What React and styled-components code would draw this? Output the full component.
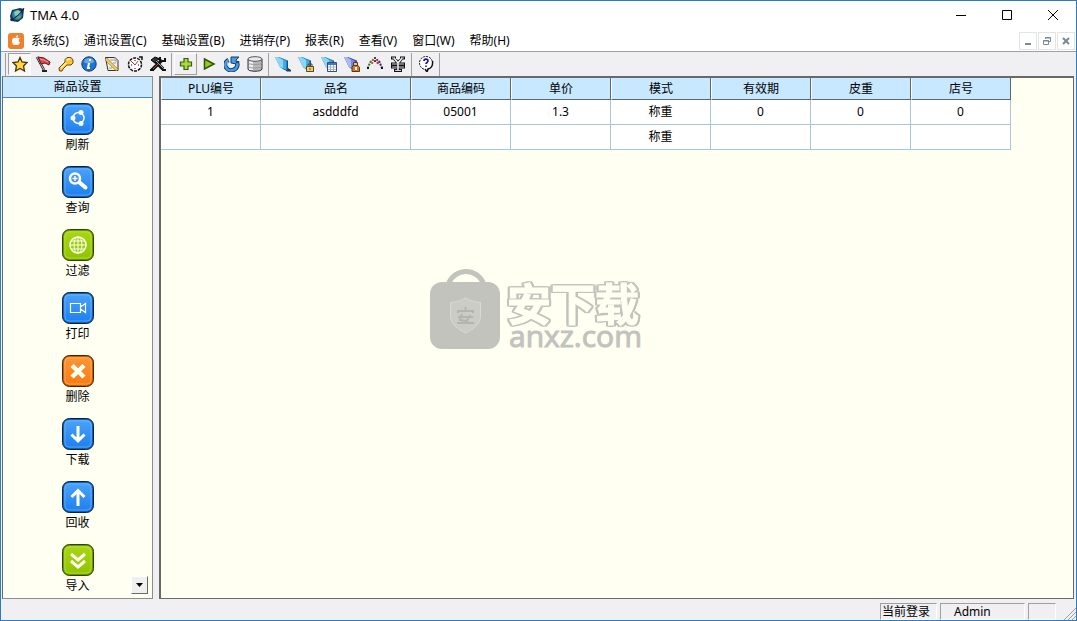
import React from 'react';
import styled, { createGlobalStyle, css } from 'styled-components';

const menus = [
  '系统(S)',
  '通讯设置(C)',
  '基础设置(B)',
  '进销存(P)',
  '报表(R)',
  '查看(V)',
  '窗口(W)',
  '帮助(H)',
];

const toolGroups = [
  [
    { name: 'star', state: 'pressed' },
    { name: 'flag' },
    { name: 'key' },
    { name: 'info' },
    { name: 'note' },
    { name: 'clock' },
    { name: 'tools' },
  ],
  [{ name: 'plus', state: 'raised' }, { name: 'play' }, { name: 'reload' }, { name: 'database' }],
  [
    { name: 'book' },
    { name: 'bookLock' },
    { name: 'bookGrid' },
    { name: 'bookUser' },
    { name: 'people' },
    { name: 'yen' },
  ],
  [{ name: 'help' }],
];

const sideItems = [
  { label: '刷新', icon: 'share', color: 'blue' },
  { label: '查询', icon: 'search', color: 'blue' },
  { label: '过滤', icon: 'globe', color: 'green' },
  { label: '打印', icon: 'camera', color: 'blue' },
  { label: '删除', icon: 'cross', color: 'orange' },
  { label: '下载', icon: 'down', color: 'blue' },
  { label: '回收', icon: 'up', color: 'blue' },
  { label: '导入', icon: 'chevrons', color: 'green' },
];

const columns = [
  { title: 'PLU编号', width: 100 },
  { title: '品名', width: 150 },
  { title: '商品编码', width: 100 },
  { title: '单价', width: 100 },
  { title: '模式', width: 100 },
  { title: '有效期', width: 100 },
  { title: '皮重', width: 100 },
  { title: '店号', width: 100 },
];

const rows = [
  ['1', 'asdddfd', '05001', '1.3', '称重', '0', '0', '0'],
  ['', '', '', '', '称重', '', '', ''],
];

const tileColors = {
  blue: { top: '#4aa3f8', bottom: '#1e7ff0', edge: '#06243f', mid: '#1160b4', light: '#7cbcf8' },
  green: { top: '#a8d614', bottom: '#8fc400', edge: '#2c4200', mid: '#6b9600', light: '#c3e552' },
  orange: { top: '#ff9636', bottom: '#f57c12', edge: '#4a2202', mid: '#c25e08', light: '#ffb772' },
};

const bookShape = (
  <>
    <path d="M6 11l6 4.500h4V14l-3-2z" fill="#2a3550" />
    <path d="M0 1h4l9 3.500V14H9L5 11z" fill="#1f86c4" />
    <path d="M1 1.500h3L11 5v8H9L5 11z" fill="#45ade0" />
    <path d="M0 1h3l5 3v8L5 11z" fill="#8fd6f5" />
    <path d="M12 5h1v9.500l-1-.5z" fill="#14508c" />
  </>
);

const toolGlyphs = {
  star: (
    <path
      d="M8 1.500 10 6l5 .5-3.500 3.500 1 5L8 12.500 3.500 15l1-5L1 6.500 6 6z"
      fill="#ffd83a"
      stroke="#4a3500"
      strokeWidth="1.300"
    />
  ),
  flag: (
    <>
      <path d="M2 1 9 14" stroke="#222" strokeWidth="2.500" />
      <path d="M2 1 9 14" stroke="#c4c4c4" />
      <path d="M3 1 9 2l6 4-1 3-4-2-4 1z" fill="#d8484e" stroke="#6a1418" />
      <path d="M5 3 9 4l4 2" stroke="#f29a9d" />
      <path d="M7 15h5" stroke="#222" strokeWidth="2" />
    </>
  ),
  key: (
    <>
      <path
        d="M9 1.500h4L15 4v3l-2 2H9l-4 4-1 2H1.500L1 12l6-6V3.500z"
        fill="#f7c53c"
        stroke="#6f4a05"
      />
      <path d="M9 4 12 2.500M3 12l5-5" stroke="#fff0a0" strokeWidth="1.500" />
    </>
  ),
  info: (
    <>
      <circle cx="8" cy="8" r="7.200" fill="#1f74d0" stroke="#123a78" />
      <path d="M3 6a5 4 0 0 1 10 0c-3 2-7 2-10 0" fill="#65a9ea" />
      <path d="M9 3v2M8 7 7 12h2" stroke="#fff" strokeWidth="2" fill="none" />
    </>
  ),
  note: (
    <>
      <path d="M1.500 1.500H11l3 3v10H4z" fill="#f4f1df" stroke="#333" />
      <path d="M11 1v4h3M6 4h4M9 7h3M5 12h3" stroke="#999" fill="none" />
      <path d="M2 3 13 14" stroke="#8a6a28" strokeWidth="3" />
      <path d="M2 3 13 14" stroke="#f6cd68" strokeWidth="2" />
    </>
  ),
  clock: (
    <>
      <circle
        cx="8"
        cy="8.500"
        r="6.500"
        fill="#fff"
        stroke="#111"
        strokeWidth="1.500"
        strokeDasharray="3 1"
      />
      <path d="M8 9 4 5M8 9l3-4" stroke="#b43030" />
      <path d="M8 4v1M8 12v1M4 9h1M11 9h1" stroke="#111" />
      <path d="M12 1h3v3" stroke="#111" fill="none" strokeWidth="1.500" />
    </>
  ),
  tools: (
    <>
      <path d="M2 14 12 4M4 4l9 9" stroke="#111" strokeWidth="3.500" />
      <path d="M1 4 5 1l5 2-3 1-2 3z" fill="#333" stroke="#000" />
      <path d="M10 1v4h5V2M12 14h4M0 14h4" stroke="#111" strokeWidth="2" fill="none" />
      <path d="M3 13 9 7" stroke="#c13c3c" />
      <path d="M6 5 13 12" stroke="#aaa" />
    </>
  ),
  plus: (
    <path
      d="M6 2.500h4V6h3.500v4H10v3.500H6V10H2.500V6H6z"
      fill="#a5dc38"
      stroke="#3c5c14"
      strokeWidth="1.200"
    />
  ),
  play: <path d="M3.500 3 13 8l-9.500 5z" fill="#8ed01c" stroke="#34500f" strokeWidth="1.500" />,
  reload: (
    <>
      <path
        d="M4.500 4A6 5.500 0 1 0 13 7V5"
        fill="none"
        stroke="#153c6e"
        strokeWidth="4.500"
      />
      <path d="M7 1h8l-3 3 1 4-6-1z" fill="#4a9be0" stroke="#153c6e" />
      <path d="M4.500 4A6 5.500 0 1 0 13 7" fill="none" stroke="#4a9be0" strokeWidth="2.500" />
      <path d="M4 6a4 4 0 0 0 1 5" fill="none" stroke="#b6dcf7" />
    </>
  ),
  database: (
    <>
      <path d="M1 3v10c0 3 14 3 14 0V3" fill="#b8b8b8" stroke="#333" />
      <path d="M4 4v10" stroke="#eee" strokeWidth="4" />
      <path d="M1 7c2 2 12 2 14 0M1 10.500c2 2 12 2 14 0" fill="none" stroke="#999" />
      <ellipse cx="8" cy="3" rx="7" ry="2.300" fill="#eaeaea" stroke="#555" />
    </>
  ),
  book: bookShape,
  bookLock: (
    <>
      {bookShape}
      <path d="M8.500 10.500h7v5h-7z" fill="#ecd06b" stroke="#5c4a16" />
      <path d="M10 10V8h4v2" stroke="#5c4a16" fill="none" />
      <path d="M12 12v2" stroke="#5c4a16" />
    </>
  ),
  bookGrid: (
    <>
      {bookShape}
      <path d="M6.500 6.500h9v9h-9z" fill="#fff" stroke="#334c7c" />
      <path d="M7 8h8" stroke="#5371ac" strokeWidth="2" />
      <path d="M7 11h8M7 13.500h8M9.500 9v6M12.500 9v6" stroke="#a3b0c8" />
    </>
  ),
  bookUser: (
    <>
      <path d="M0 1h4l9 3.500V14H9L5 11z" fill="#3f4bb0" />
      <path d="M1 1.500h3L11 5v8H9L5 11z" fill="#6f8ae0" />
      <path d="M0 1h3l4 3v7.500L5 11z" fill="#a9bcf2" />
      <path d="M9 9.500h5l1.500 2v4H8v-4z" fill="#d07a2b" stroke="#5a3416" />
      <path d="M9.500 6.500h4v3h-4z" fill="#f0c28d" stroke="#5a3416" />
      <path d="M11 11h2v3h-2z" fill="#fff" />
    </>
  ),
  people: (
    <>
      <path d="M4 5 1 11" stroke="#24832c" strokeWidth="2" strokeDasharray="2 1" />
      <path d="M6 3 5 8" stroke="#d24a35" strokeWidth="2" strokeDasharray="2 1" />
      <path d="M8 1v5" stroke="#111" strokeWidth="1.500" strokeDasharray="2 1" />
      <path d="m10 3 1 6" stroke="#b82836" strokeWidth="2" strokeDasharray="2 1" />
      <path d="m12 5 3 7" stroke="#3a2f78" strokeWidth="2" strokeDasharray="2 1" />
      <path d="M0 12h2M14 12h2" stroke="#111" strokeWidth="2" />
    </>
  ),
  yen: (
    <>
      <path
        d="M1 2h5M10 2h5M4 2l4 5 4-5M1 8h14M1 11h14M8 7v7M4 14.500h8"
        stroke="#111"
        strokeWidth="3"
        fill="none"
      />
      <path d="M4 2l4 5 4-5M8 7v7" stroke="#f4f4f4" strokeWidth="1.600" fill="none" />
      <path d="M2 8h12M2 11h12M2 2h3M11 2h3M5 14.500h6" stroke="#d4d4d4" fill="none" />
    </>
  ),
  help: (
    <>
      <circle cx="8" cy="7" r="6.500" fill="#fff" stroke="#111" strokeDasharray="2 1" />
      <path d="M7 13l2 3 1-3c4-1 5-4 4.500-8" fill="#fff" stroke="#111" strokeWidth="1.500" />
      <path
        d="M6 5c0-2.500 4-2.500 4 0 0 1.500-2 1.500-2 3M8 9.500v1.500"
        fill="none"
        stroke="#171796"
        strokeWidth="1.600"
      />
    </>
  ),
};

const tileGlyphs = {
  share: (
    <>
      <circle cx="16.500" cy="15" r="5.500" fill="none" strokeWidth="1.500" />
      <circle cx="11" cy="15" r="2.500" fill="#fff" stroke="none" />
      <circle cx="19" cy="9.500" r="2.500" fill="#fff" stroke="none" />
      <circle cx="19" cy="20.500" r="2.500" fill="#fff" stroke="none" />
    </>
  ),
  search: (
    <>
      <circle cx="13" cy="12.500" r="5" strokeWidth="2.500" />
      <path d="M10.500 12.500h5M13 10v5" strokeWidth="1.500" />
      <path d="m17.500 16.500 6 5" strokeWidth="4" strokeLinecap="round" />
    </>
  ),
  globe: (
    <>
      <circle cx="16" cy="16" r="8" strokeWidth="1.500" />
      <ellipse cx="16" cy="16" rx="4" ry="8" />
      <path d="M16 8v16M8 16h16M9.500 12h13M9.500 20h13" />
    </>
  ),
  camera: <path d="M8.500 11.500h10v9h-10zM18.500 15l5-3.500v9l-5-3.500" strokeWidth="1.200" />,
  cross: <path d="m10 10.500 12 11.500M22 10.500 10 22" strokeWidth="4.500" />,
  down: <path d="M16 8v15M9.500 16.500 16 23l6.500-6.500" strokeWidth="3" />,
  up: <path d="M16 25V10M9.500 16 16 9.500l6.500 6.500" strokeWidth="3" />,
  chevrons: <path d="m9 10 7 6 7-6M9 17l7 6 7-6" strokeWidth="3" />,
};

function ToolIcon({ name }) {
  return (
    <svg width="16" height="16" viewBox="0 0 16 16" fill="none" aria-hidden="true">
      {toolGlyphs[name]}
    </svg>
  );
}

function TileIcon({ icon, color }) {
  const c = tileColors[color];
  return (
    <svg width="32" height="32" viewBox="0 0 32 32" fill="none" aria-hidden="true">
      <defs>
        <linearGradient id={`fill-${icon}`} x1="0" y1="0" x2="0" y2="1">
          <stop offset="0" stopColor={c.top} />
          <stop offset="1" stopColor={c.bottom} />
        </linearGradient>
      </defs>
      <rect x="0.5" y="0.5" width="31" height="31" rx="7" fill={c.mid} stroke={c.edge} />
      <rect x="2" y="2" width="28" height="28" rx="5" fill={`url(#fill-${icon})`} />
      <rect x="3" y="3" width="26" height="26" rx="4" stroke={c.light} opacity="0.6" />
      <g stroke="#fffff2">{tileGlyphs[icon]}</g>
    </svg>
  );
}

function AppLogo() {
  return (
    <svg width="16" height="16" viewBox="0 0 16 16" aria-hidden="true">
      <path d="M3 3 11 1l4 1-1 9-5 4-7-1-1-5z" fill="#16374f" />
      <circle cx="8" cy="8" r="5" fill="#2d7fae" />
      <path d="M5 5 9 3l3 2-3 3-3 1z" fill="#8cc8bf" />
      <path d="M7 10l4-2 1 2-3 2z" fill="#66a368" />
      <path d="M1 13C4 13 13 6 15 1" fill="none" stroke="#0b1d30" />
    </svg>
  );
}

function AppleBadge() {
  return (
    <svg width="16" height="16" viewBox="0 0 16 16" aria-hidden="true">
      <rect width="16" height="16" rx="3" fill="#f0812c" />
      <path
        d="M11 5c-1-1-2-.5-3 0-2-1-4 0-4 3 0 2 1 4.500 3 4 1-.3 1.500-.3 2 0 1.500.3 2.500-1 3-2.500-1.500-1-1.800-3-.2-4zM8 4.500C8 3 9 2.200 10 2c0 1.500-1 2.300-2 2.500"
        fill="#fff"
      />
    </svg>
  );
}

function Watermark() {
  return (
    <WatermarkBox>
      <svg width="71" height="81" viewBox="0 0 71 81" aria-hidden="true">
        <path d="M18 16c6-18 30-18 36 0" fill="none" stroke="#c2c3bd" strokeWidth="5" />
        <rect x="0" y="13" width="70" height="67" rx="12" fill="#c2c3bd" />
        <path
          d="M35.500 29c5 3 10 4 15 4.500V47c0 8-7 13-15 17-8-4-15-9-15-17V33.500c5-.5 10-1.500 15-4.500z"
          fill="#cbccc6"
          stroke="#d8d9d2"
        />
        <path
          d="M35.500 38v3M28 44v-2h15v2M28 48h15M32 45c-1 3-2 5-2 6 4 0 7 1 10 3M40 46c-1 4-4 7-9 8M27 54h17"
          fill="none"
          stroke="#b4b5af"
          strokeWidth="2"
        />
      </svg>
      <WatermarkText>
        <WatermarkName>安下载</WatermarkName>
        <WatermarkSite>anxz.com</WatermarkSite>
      </WatermarkText>
    </WatermarkBox>
  );
}

function App() {
  return (
    <>
      <GlobalStyle />
      <Window>
        <TitleBar>
          <AppLogo />
          <Title>TMA 4.0</Title>
          <CaptionButton aria-label="Minimize">
            <svg width="12" height="12" viewBox="0 0 12 12" stroke="#000" fill="none">
              <path d="M1 6.500h10" />
            </svg>
          </CaptionButton>
          <CaptionButton aria-label="Maximize">
            <svg width="12" height="12" viewBox="0 0 12 12" stroke="#000" fill="none">
              <path d="M1.500 1.500h9v9h-9z" />
            </svg>
          </CaptionButton>
          <CaptionButton aria-label="Close">
            <svg width="12" height="12" viewBox="0 0 12 12" stroke="#000" fill="none">
              <path d="m1 1 10 10M11 1 1 11" />
            </svg>
          </CaptionButton>
        </TitleBar>

        <MenuBar>
          <AppleBadge />
          <MenuList>
            {menus.map(menu => (
              <MenuButton key={menu}>{menu}</MenuButton>
            ))}
          </MenuList>
          <ChildControls>
            <ChildButton aria-label="Minimize child window">
              <svg width="10" height="10" viewBox="0 0 10 10" stroke="#7a8794" fill="none">
                <path d="M2 8h6" strokeWidth="2" />
              </svg>
            </ChildButton>
            <ChildButton aria-label="Restore child window">
              <svg width="10" height="10" viewBox="0 0 10 10" stroke="#7a8794" fill="none">
                <path d="M3.500 3V1.500h5v4H7M3 2h6M1 5h6" />
                <path d="M1.500 4.500h5v4h-5z" />
              </svg>
            </ChildButton>
            <ChildButton aria-label="Close child window">
              <svg width="10" height="10" viewBox="0 0 10 10" stroke="#7a8794" fill="none">
                <path d="m2 2 6 6M8 2 2 8" strokeWidth="2" />
              </svg>
            </ChildButton>
          </ChildControls>
        </MenuBar>

        <ToolBar>
          {toolGroups.map((group, index) => (
            <ToolGroup key={index}>
              {group.map(tool => (
                <ToolButton key={tool.name} $state={tool.state} aria-label={tool.name}>
                  <ToolIcon name={tool.name} />
                </ToolButton>
              ))}
            </ToolGroup>
          ))}
        </ToolBar>

        <Workspace>
          <Sidebar>
            <SidebarTitle>商品设置</SidebarTitle>
            <SideList>
              {sideItems.map(item => (
                <li key={item.label}>
                  <SideButton>
                    <TileIcon icon={item.icon} color={item.color} />
                    {item.label}
                  </SideButton>
                </li>
              ))}
            </SideList>
            <ScrollButton aria-label="Scroll down">
              <svg width="7" height="4" viewBox="0 0 7 4" aria-hidden="true">
                <path d="M0 0h7L3.500 4z" fill="#000" />
              </svg>
            </ScrollButton>
          </Sidebar>

          <Content>
            <Table>
              <colgroup>
                {columns.map(column => (
                  <Col key={column.title} $width={column.width} />
                ))}
              </colgroup>
              <thead>
                <tr>
                  {columns.map(column => (
                    <HeadCell key={column.title}>{column.title}</HeadCell>
                  ))}
                </tr>
              </thead>
              <tbody>
                {rows.map((row, rowIndex) => (
                  <tr key={rowIndex}>
                    {row.map((value, index) => (
                      <Cell key={index}>{value}</Cell>
                    ))}
                  </tr>
                ))}
              </tbody>
            </Table>
            <Watermark />
          </Content>
        </Workspace>

        <StatusBar>
          <StatusPane $width={57}>当前登录</StatusPane>
          <StatusPane $width={85} $indent={13}>
            Admin
          </StatusPane>
          <StatusPane $width={28} />
          <SizeGrip width="14" height="14" viewBox="0 0 14 14" stroke="#a0a0a0" aria-hidden="true">
            <path d="M2 14 14 2M6 14l8-8M10 14l4-4" />
          </SizeGrip>
        </StatusBar>
      </Window>
    </>
  );
}

const GlobalStyle = createGlobalStyle`
  * {
    box-sizing: border-box;
  }

  body {
    margin: 0;
    font-family: 'Noto Sans', 'Noto Sans CJK SC', sans-serif;
    font-size: 12px;
    line-height: 18px;
    color: #000;
  }

  button {
    padding: 0;
    border: 0;
    background: none;
    font: inherit;
    color: inherit;
  }

  svg {
    display: block;
    flex-shrink: 0;
  }
`;

const Window = styled.div`
  display: flex;
  flex-direction: column;
  min-height: 100vh;
  border: 1px solid #2b7cc0;
  background: #f0eff1;
`;

const TitleBar = styled.header`
  display: flex;
  align-items: center;
  height: 28px;
  padding-left: 8px;
  background: #fff;
`;

const Title = styled.h1`
  flex: 1;
  margin: 0 0 0 5px;
  font-size: 13px;
  font-weight: 400;
`;

const CaptionButton = styled.button`
  display: flex;
  align-items: center;
  justify-content: center;
  width: 46px;
  height: 28px;
`;

const MenuBar = styled.nav`
  display: flex;
  align-items: center;
  height: 23px;
  padding: 1px 1px 0 7px;
  border-bottom: 1px solid #a0a0a0;
  background: #fff;
`;

const MenuList = styled.div`
  display: flex;
  flex: 1;
  gap: 1px;
`;

const MenuButton = styled.button`
  padding: 0 7px;
  white-space: nowrap;
`;

const ChildControls = styled.div`
  display: flex;
  gap: 1px;
`;

const ChildButton = styled.button`
  display: flex;
  align-items: center;
  justify-content: center;
  width: 18px;
  height: 18px;
  border: 1px solid #e4e4e4;
`;

const ToolBar = styled.div`
  display: flex;
  height: 24px;
  padding: 1px 0 0 4px;
`;

const ToolGroup = styled.div`
  display: flex;
  padding: 0 2px;
  border-left: 1px solid #a0a0a0;

  &:last-child {
    border-right: 1px solid #a0a0a0;
  }
`;

const ToolButton = styled.button`
  display: flex;
  align-items: center;
  justify-content: center;
  width: 23px;
  height: 22px;
  border: 1px solid transparent;

  ${({ $state }) =>
    $state === 'pressed' &&
    css`
      border-color: #a0a0a0 #fff #fff #a0a0a0;
      background: #f8f7f8;
    `}

  ${({ $state }) =>
    $state === 'raised' &&
    css`
      border-color: #fff #a0a0a0 #a0a0a0 #fff;
    `}
`;

const Workspace = styled.main`
  display: flex;
  flex: 1;
  gap: 6px;
  padding: 0 2px 0 1px;
`;

const Sidebar = styled.aside`
  position: relative;
  flex-shrink: 0;
  width: 151px;
  border: 1px solid #8c8c8c;
  border-left-color: #696969;
  background: #fffff2;
`;

const SidebarTitle = styled.h2`
  height: 21px;
  margin: 0;
  border-bottom: 1px solid #4a87b8;
  background: #c8e8ff;
  font-size: 12px;
  font-weight: 400;
  line-height: 20px;
  text-align: center;
`;

const SideList = styled.ul`
  display: flex;
  flex-direction: column;
  gap: 12px;
  margin: 0;
  padding: 5px 0 0;
  list-style: none;
`;

const SideButton = styled.button`
  display: flex;
  flex-direction: column;
  align-items: center;
  gap: 1px;
  width: 100%;
  height: 51px;
`;

const ScrollButton = styled.button`
  position: absolute;
  right: 4px;
  bottom: 4px;
  display: flex;
  align-items: center;
  justify-content: center;
  width: 17px;
  height: 18px;
  border: 1px solid;
  border-color: #fff #696969 #696969 #fff;
  background: #f0f0f0;
`;

const Content = styled.section`
  position: relative;
  flex: 1;
  border: 1px solid #696969;
  border-width: 2px 1px 1px 2px;
  background: #fffff2;
`;

const Table = styled.table`
  width: 850px;
  table-layout: fixed;
  border-spacing: 0;
`;

const Col = styled.col`
  width: ${({ $width }) => $width}px;
`;

const HeadCell = styled.th`
  height: 22px;
  padding: 0;
  border: 1px solid #58696f;
  border-top: 0;
  border-left-color: #fff;
  background: #c8e8ff;
  font-weight: 400;
`;

const Cell = styled.td`
  height: 25px;
  padding: 0;
  border: 1px solid #a9c5dc;
  border-top: 0;
  border-left: 0;
  background: #fff;
  text-align: center;
`;

const WatermarkBox = styled.div`
  position: absolute;
  top: 191px;
  left: 269px;
  display: flex;
  gap: 6px;
  color: #c2c3bd;
`;

const WatermarkText = styled.div`
  padding-top: 14px;
`;

const WatermarkName = styled.div`
  font-size: 44px;
  font-weight: 700;
  line-height: 42px;
  color: #fffff2;
  -webkit-text-stroke: 1px #fffff2;
  filter: drop-shadow(2px 0 #c2c3bd) drop-shadow(-2px 0 #c2c3bd) drop-shadow(0 1px #c2c3bd)
    drop-shadow(0 -1px #c2c3bd);
`;

const WatermarkSite = styled.div`
  padding-left: 2px;
  font-family: 'Open Sans', 'Noto Sans', sans-serif;
  font-size: 30px;
  font-weight: 500;
  line-height: 22px;
  -webkit-text-stroke: 1px #c2c3bd;
`;

const StatusBar = styled.footer`
  display: flex;
  align-items: flex-end;
  justify-content: flex-end;
  gap: 3px;
  height: 21px;
  padding-top: 3px;
`;

const StatusPane = styled.div`
  width: ${({ $width }) => $width}px;
  height: 17px;
  padding-left: ${({ $indent = 1 }) => $indent}px;
  border: 1px solid;
  border-color: #a0a0a0 #fff #fff #a0a0a0;
  line-height: 16px;
  white-space: nowrap;
`;

const SizeGrip = styled.svg`
  margin-left: 3px;
`;

export default App;
